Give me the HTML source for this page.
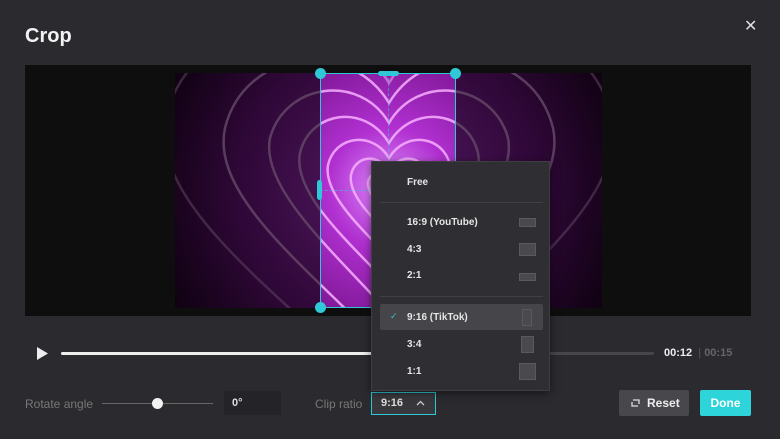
<!DOCTYPE html>
<html><head><meta charset="utf-8"><style>
*{margin:0;padding:0;box-sizing:border-box}
body{width:780px;height:439px;background:#2b2b2f;font-family:"Liberation Sans",sans-serif;color:#e8e8e8;position:relative;overflow:hidden}
.a{position:absolute}
.dd div.t{position:absolute;left:35px;font-size:10px;font-weight:bold;color:#e6e6e6}
.sw{position:absolute;background:#4a4a4e;border:1px solid #5a5a5e}
</style></head><body>
<div class="a" style="left:25px;top:25px;font-size:20px;font-weight:bold;color:#f2f2f2">Crop</div>
<div class="a" style="left:744px;top:16px;font-size:16px;color:#ddd">✕</div>
<div class="a" style="left:25px;top:65px;width:726px;height:251px;background:#0e0e0e"></div>
<svg class="a" style="left:175px;top:73px" width="427" height="235" viewBox="0 0 427 235">
<defs><radialGradient id="g" cx="214" cy="115" r="240" gradientUnits="userSpaceOnUse"><stop offset="0" stop-color="#e090ff"/><stop offset="0.25" stop-color="#b030d0"/><stop offset="0.6" stop-color="#7a1590"/><stop offset="1" stop-color="#2a0530"/></radialGradient></defs>
<rect width="427" height="235" fill="url(#g)"/>
<g fill="none" stroke="#f8b0ff" stroke-width="2.5" opacity="0.85">
<path d="M214 10 C160 -80 10 -60 -10 50 C-20 140 120 230 214 330 C308 230 448 140 438 50 C418 -60 268 -80 214 10Z" opacity="0.6"/>
<path d="M214 30 C175 -35 70 -25 50 55 C35 125 140 200 214 280 C288 200 393 125 378 55 C358 -25 253 -35 214 30Z"/>
<path d="M214 50 C185 0 110 10 95 65 C85 115 160 180 214 240 C268 180 343 115 333 65 C318 10 243 0 214 50Z"/>
<path d="M214 70 C190 30 135 38 125 80 C117 120 175 170 214 212 C253 170 311 120 303 80 C293 38 238 30 214 70Z"/>
<path d="M214 85 C198 58 160 62 153 92 C148 122 190 158 214 185 C238 158 280 122 275 92 C268 62 230 58 214 85Z"/>
<path d="M214 98 C204 80 180 82 176 102 C173 122 198 145 214 162 C230 145 255 122 252 102 C248 82 224 80 214 98Z"/>
<path d="M214 107 C208 97 195 98 193 109 C192 120 205 133 214 142 C223 133 236 120 235 109 C233 98 220 97 214 107Z"/>
</g>
<rect x="0" y="0" width="145" height="235" fill="#000" opacity="0.6"/>
<rect x="281" y="0" width="146" height="235" fill="#000" opacity="0.6"/>
</svg>
<div class="a" style="left:320px;top:73px;width:136px;height:235px;border:1px solid #2ec8d6"></div>
<div class="a" style="left:388px;top:73px;height:235px;border-left:1px dashed rgba(46,200,214,.6)"></div>
<div class="a" style="left:320px;top:190px;width:136px;border-top:1px dashed rgba(46,200,214,.6)"></div>
<div class="a" style="left:315px;top:68px;width:11px;height:11px;border-radius:50%;background:#2ec8d6"></div>
<div class="a" style="left:450px;top:68px;width:11px;height:11px;border-radius:50%;background:#2ec8d6"></div>
<div class="a" style="left:315px;top:302px;width:11px;height:11px;border-radius:50%;background:#2ec8d6"></div>
<div class="a" style="left:378px;top:71px;width:21px;height:5px;border-radius:3px;background:#2ec8d6"></div>
<div class="a" style="left:317px;top:180px;width:5px;height:20px;border-radius:3px;background:#2ec8d6"></div>
<svg class="a" style="left:37px;top:347px" width="11" height="13"><path d="M0 0L11 6.5L0 13Z" fill="#eee"/></svg>
<div class="a" style="left:61px;top:352px;width:593px;height:3px;background:#47474b;border-radius:2px"></div>
<div class="a" style="left:61px;top:352px;width:320px;height:3px;background:#eee;border-radius:2px"></div>
<div class="a" style="left:664px;top:347px;font-size:11px;font-weight:bold;color:#eee">00:12 <span style="color:#555;font-weight:normal">&nbsp;|&nbsp;</span><span style="color:#666">00:15</span></div>
<div class="a" style="left:25px;top:397px;font-size:12px;color:#777">Rotate angle</div>
<div class="a" style="left:102px;top:403px;width:111px;height:1px;background:#666"></div>
<div class="a" style="left:152px;top:398px;width:11px;height:11px;border-radius:50%;background:#f2f2f2"></div>
<div class="a" style="left:224px;top:391px;width:57px;height:24px;background:#242428"></div>
<div class="a" style="left:232px;top:397px;font-size:11px;font-weight:bold;color:#ddd">0°</div>
<div class="a" style="left:315px;top:397px;font-size:12px;color:#777">Clip ratio</div>
<div class="a" style="left:371px;top:392px;width:65px;height:23px;border:1px solid #2ec8d6;background:#38383c"></div>
<div class="a" style="left:381px;top:397px;font-size:11px;font-weight:bold;color:#ddd">9:16</div>
<svg class="a" style="left:416px;top:400px" width="9" height="6"><path d="M1 5L4.5 1.5L8 5" stroke="#ccc" stroke-width="1.3" fill="none"/></svg>
<div class="a" style="left:619px;top:390px;width:70px;height:26px;background:#48484c;border-radius:2px"></div>
<svg class="a" style="left:630px;top:398px" width="11" height="10"><path d="M3 2H9V6M8 8H2V4" stroke="#ddd" stroke-width="1.3" fill="none"/></svg>
<div class="a" style="left:647px;top:396px;font-size:12px;font-weight:bold;color:#eee">Reset</div>
<div class="a" style="left:700px;top:390px;width:51px;height:26px;background:#2dd4da;border-radius:2px;color:#fff;font-size:12px;font-weight:bold;text-align:center;line-height:26px">Done</div>
<div class="a dd" style="left:371px;top:161px;width:179px;height:230px;background:#2f2f33;border:1px solid #3e3e42;box-shadow:0 2px 8px rgba(0,0,0,.5)">
<div class="t" style="top:15px">Free</div>
<div class="a" style="left:8px;top:40px;width:163px;height:1px;background:#404044"></div>
<div class="t" style="top:55px">16:9 (YouTube)</div><div class="sw" style="left:147px;top:56px;width:17px;height:9px"></div>
<div class="t" style="top:82px">4:3</div><div class="sw" style="left:147px;top:81px;width:17px;height:13px"></div>
<div class="t" style="top:108px">2:1</div><div class="sw" style="left:147px;top:111px;width:17px;height:8px"></div>
<div class="a" style="left:8px;top:134px;width:163px;height:1px;background:#404044"></div>
<div class="a" style="left:8px;top:142px;width:163px;height:26px;background:#45454a;border-radius:2px"></div>
<div class="a" style="left:18px;top:149px;font-size:9px;color:#2ec8d6">✓</div>
<div class="t" style="top:150px">9:16 (TikTok)</div><div class="sw" style="left:150px;top:147px;width:10px;height:17px"></div>
<div class="t" style="top:177px">3:4</div><div class="sw" style="left:149px;top:174px;width:13px;height:17px"></div>
<div class="t" style="top:204px">1:1</div><div class="sw" style="left:147px;top:201px;width:17px;height:17px"></div>
</div>
</body></html>
